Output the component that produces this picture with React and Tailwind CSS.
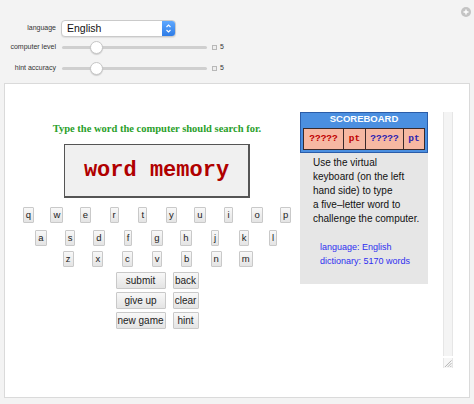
import React from "react";

const Key = ({ children }) => (
  <div className="h-[16px] px-[2px] min-w-[8px] flex items-center justify-center border border-[#c9c9c9] bg-linear-to-b from-[#f8f8f8] to-[#e4e4e4] text-[9.5px] text-[#222] rounded-[1px]">
    {children}
  </div>
);

const Btn = ({ children }) => (
  <div className="h-[17px] flex items-center justify-center border border-[#c9c9c9] bg-linear-to-b from-[#f8f8f8] to-[#e4e4e4] text-[10px] text-[#222] rounded-[1px]">
    {children}
  </div>
);

const KeyRow = ({ keys, cell, className = "" }) => (
  <div className={"flex justify-center h-[16px] " + className}>
    {keys.map((k) => (
      <div key={k} className={"flex justify-center " + cell}>
        <Key>{k}</Key>
      </div>
    ))}
  </div>
);

const Slider = () => (
  <div className="flex items-center">
    <div className="relative w-[145px] h-[13px]">
      <div className="absolute left-0 right-0 top-[5px] h-[3px] rounded-full bg-[#cfcfcf]" />
      <div className="absolute left-[28px] top-0 w-[13px] h-[13px] rounded-full bg-white border border-[#c6c6c6] shadow-[0_1px_1px_rgba(0,0,0,0.15)]" />
    </div>
    <div className="ml-[5px] w-[5px] h-[5px] border border-[#b8b8b8] bg-[#eee]" />
    <div className="ml-[3px] text-[7px] text-[#333]">5</div>
  </div>
);

export default function App() {
  const row1 = ["q", "w", "e", "r", "t", "y", "u", "i", "o", "p"];
  const row2 = ["a", "s", "d", "f", "g", "h", "j", "k", "l"];
  const row3 = ["z", "x", "c", "v", "b", "n", "m"];
  return (
    <div
      className="relative w-[474px] h-[404px] bg-[#f3f3f3] overflow-hidden"
      style={{ fontFamily: '"Liberation Sans", Arial, sans-serif' }}
    >
      {/* corner plus icon */}
      <div className="absolute left-[461px] top-[7px] w-[10px] h-[10px] rounded-full bg-[#c4c4c4] flex items-center justify-center">
        <svg width="6" height="6" viewBox="0 0 6 6">
          <path d="M3 0.5V5.5M0.5 3H5.5" stroke="#fff" strokeWidth="1.4" />
        </svg>
      </div>

      {/* controls */}
      <div className="h-[83px] flex flex-col">
        <div className="flex items-center mt-[20px] h-[17px]">
          <div className="w-[56px] text-right text-[7px] text-[#333]">language</div>
          <div className="ml-[5px] w-[115px] h-[17px] flex border border-[#cacaca] rounded-[4px] bg-white shadow-[0_1px_1px_rgba(0,0,0,0.08)]">
            <div className="flex-1 pl-[5px] text-[10.5px] leading-[15px] text-[#111]">English</div>
            <div className="w-[13px] h-full rounded-r-[3px] bg-linear-to-b from-[#5ea8ff] to-[#2e7ce6] flex items-center justify-center">
              <svg width="7" height="11" viewBox="0 0 7 11">
                <path d="M1.5 4L3.5 2L5.5 4M1.5 7L3.5 9L5.5 7" stroke="#fff" strokeWidth="1.1" fill="none" />
              </svg>
            </div>
          </div>
        </div>
        <div className="flex items-center mt-[4px] h-[13px]">
          <div className="w-[56px] text-right text-[7px] text-[#333]">computer level</div>
          <div className="ml-[6px]">
            <Slider />
          </div>
        </div>
        <div className="flex items-center mt-[8px] h-[13px]">
          <div className="w-[56px] text-right text-[7px] text-[#333]">hint accuracy</div>
          <div className="ml-[6px]">
            <Slider />
          </div>
        </div>
      </div>

      {/* main panel */}
      <div className="mx-[4px] h-[315px] border border-[#dadada] bg-white flex items-start pt-[28px]">
        {/* left column */}
        <div className="w-[295px] pl-[9px] flex flex-col items-center">
          <div
            className="mt-[9px] h-[15px] leading-[15px] text-[10.5px] font-bold text-[#2aa02a]"
            style={{ fontFamily: '"Liberation Serif", "Times New Roman", serif' }}
          >
            Type the word the computer should search for.
          </div>
          <div className="mt-[8px] w-[186px] h-[54px] border border-[#555] border-b-2 border-r-2 bg-[#f0f0f0] flex items-center justify-center">
            <span
              className="text-[22px] font-bold text-[#b00000]"
              style={{ fontFamily: '"Liberation Mono", "Courier New", monospace' }}
            >
              word memory
            </span>
          </div>
          <div className="w-full mt-[9px]">
            <KeyRow keys={row1} cell="w-[29.2px]" />
            <KeyRow keys={row2} cell="w-[29px]" className="mt-[7px]" />
            <KeyRow keys={row3} cell="w-[29.6px]" className="mt-[5px]" />
          </div>
          <div className="mt-[5px] grid grid-cols-[50px_26px] gap-x-[7px] gap-y-[3px]">
            <Btn>submit</Btn>
            <Btn>back</Btn>
            <Btn>give up</Btn>
            <Btn>clear</Btn>
            <Btn>new game</Btn>
            <Btn>hint</Btn>
          </div>
        </div>

        {/* scoreboard */}
        <div className="w-[128px]">
          <div className="bg-[#4b8fe0] border border-[#2a5ca8] px-[2px] pb-[2px]">
            <div className="h-[15px] leading-[12px] text-center text-white font-bold text-[9.5px]">
              SCOREBOARD
            </div>
            <div
              className="flex h-[22px] border border-[#3b2a2a] bg-[#f6b8a2] text-[9.5px] font-bold"
              style={{ fontFamily: '"Liberation Mono", "Courier New", monospace' }}
            >
              <div className="w-[40px] border-r border-[#3b2a2a] flex items-center justify-center text-[#c00000]">?????</div>
              <div className="w-[22px] border-r border-[#3b2a2a] flex items-center justify-center text-[#c00000]">pt</div>
              <div className="w-[38px] border-r border-[#3b2a2a] flex items-center justify-center text-[#2b22b0]">?????</div>
              <div className="flex-1 flex items-center justify-center text-[#2b22b0]">pt</div>
            </div>
          </div>
          <div className="h-[131px] bg-[#e6e6e6]">
            <div className="pl-[13px] pt-[3px] text-[10px] leading-[14px] text-[#111]">
              <div>Use the virtual</div>
              <div>keyboard (on the left</div>
              <div>hand side) to type</div>
              <div>a five–letter word to</div>
              <div>challenge the computer.</div>
            </div>
            <div className="mt-[14px] pl-[20px] text-[9px] leading-[14px] text-[#2f2ff0]">
              <div>language: English</div>
              <div>dictionary: 5170 words</div>
            </div>
          </div>
        </div>

        {/* scrollbar */}
        <div className="ml-[15px] w-[10px] flex flex-col">
          <div className="h-[244px] bg-[#f4f4f4] border-x border-[#e6e6e6]" />
          <div className="mt-[2px] h-[10px] bg-[#f7f7f7] border-x border-[#e6e6e6] flex items-end justify-end">
            <svg width="9" height="9" viewBox="0 0 9 9">
              <path d="M8.5 1L1 8.5M8.5 4L4 8.5M8.5 7L7 8.5" stroke="#999" strokeWidth="0.8" />
            </svg>
          </div>
        </div>
      </div>
    </div>
  );
}
